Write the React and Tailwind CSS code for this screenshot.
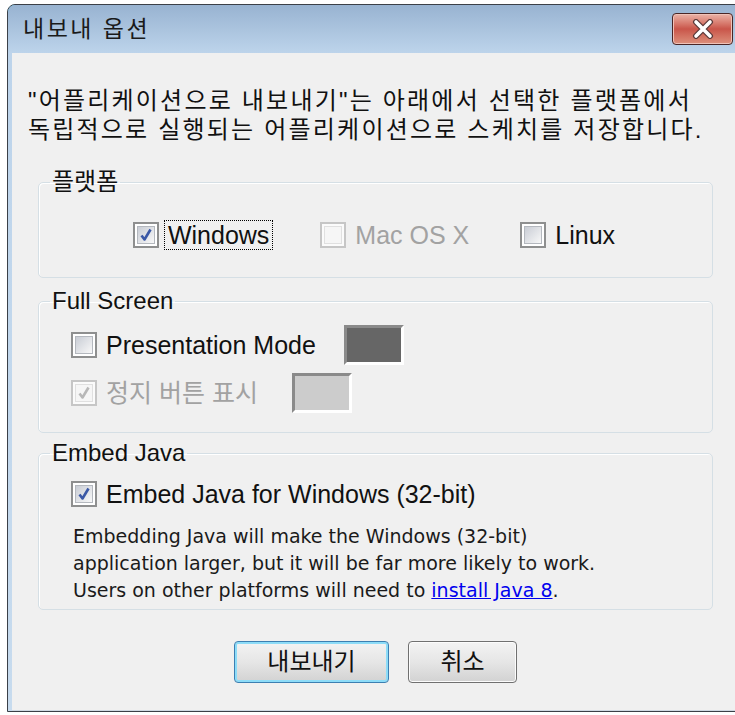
import React from 'react';

// Win7-style check box, drawn at 2x
const CheckBox = ({ checked = false, disabled = false }) => (
    <span
        className={`flex h-[26px] w-[26px] shrink-0 items-center justify-center border-2 ${disabled ? 'border-[#c6c6c6] bg-[#fbfbfb]' : 'border-[#8e8f8f] bg-white'}`}
    >
        <span
            className={`flex h-[18px] w-[18px] items-center justify-center border ${disabled ? 'border-[#e0e0e0] bg-[#f6f6f6]' : 'border-[#b4b8be] bg-linear-to-br from-[#c9cdd5] to-[#f8f8f8]'}`}
        >
            {checked && (
                <svg width="16" height="16" viewBox="0 0 16 16">
                    <path
                        d="M3.5 8.5 L6.5 12.5 L12.5 2.5"
                        fill="none"
                        stroke={disabled ? '#b8b8b8' : '#3a58a6'}
                        strokeWidth="2.6"
                        strokeLinejoin="round"
                    />
                </svg>
            )}
        </span>
    </span>
);

const Option = ({ checked, disabled, focused, children }) => (
    <label className="flex items-center gap-[5px]">
        <CheckBox checked={checked} disabled={disabled} />
        <span
            className={`px-[3px] leading-[28px] ${focused ? 'border border-dotted border-black' : 'border border-transparent'} ${disabled ? 'text-[#a2a2a2]' : 'text-[#111]'}`}
        >
            {children}
        </span>
    </label>
);

// colour well with a sunken edge
const Swatch = ({ dark = false }) => (
    <span
        className={`block h-[40px] w-[60px] border-[3px] border-t-[#8a8a8a] border-l-[#8a8a8a] border-r-white border-b-white ${dark ? 'bg-[#666666]' : 'bg-[#cccccc]'}`}
    />
);

const Group = ({ title, className = '', children }) => (
    <fieldset className={`rounded-[5px] border border-[#d5dfe5] shadow-[inset_1px_1px_0_#fff] ${className}`}>
        <legend className="ml-[11px] px-[2px] text-[24px] leading-[28px] text-[#111]">{title}</legend>
        {children}
    </fieldset>
);

const Button = ({ children, isDefault = false, className = '' }) => (
    <button
        className={`flex h-[42px] items-center justify-center rounded-[4px] border bg-linear-to-b from-[#f3f3f3] via-[#e6e6e6] to-[#d2d2d2] text-[24px] text-[#111] ${isDefault ? 'border-[#3c7fb1] shadow-[inset_0_0_0_2px_#8ddcf8]' : 'border-[#707070] shadow-[inset_0_0_0_1px_#fcfcfc]'} ${className}`}
    >
        {children}
    </button>
);

const App = () => {
    return (
        <div className="h-[715px] w-[735px] overflow-hidden bg-white font-['Liberation_Sans','Noto_Sans_CJK_KR',sans-serif]">
            <div className="ml-[7px] mt-[4px] w-[740px] rounded-tl-[8px] border border-[#3b4048] bg-[#5ccbee]">
                {/* Title bar */}
                <div className="flex h-[48px] items-center rounded-tl-[7px] bg-linear-to-b from-[#98b3d1] to-[#bdd4eb] pl-[15px]">
                    <span className="text-[23px] tracking-[2.5px] text-[#1a1a1a]">내보내 옵션</span>
                    <button className="ml-auto mr-[13px] flex h-[32px] w-[61px] items-center justify-center rounded-[4px] border border-[#4a2626] bg-linear-to-b from-[#eab3a8] via-[#c9554a] to-[#dc907c] shadow-[inset_0_0_0_1px_#f0c2b8]">
                        <svg width="26" height="20" viewBox="0 0 26 20">
                            <path d="M6 3 L20 17 M20 3 L6 17" stroke="#5a3a3a" strokeWidth="6" strokeLinecap="round" />
                            <path d="M6 3 L20 17 M20 3 L6 17" stroke="#ffffff" strokeWidth="3.6" strokeLinecap="round" />
                        </svg>
                    </button>
                </div>

                {/* Client area */}
                <div className="flex">
                    <div className="w-[4px] bg-linear-to-b from-[#bdd4eb] to-[#c7dbee]" />
                    <div className="h-[658px] flex-1 border-b border-[#cfd9e2] bg-[#f0f0f0] pl-[26px] text-[#111]">
                        <p className="-ml-[10px] pt-[33px] text-[24px] leading-[29px] tracking-[2.2px]">
                            "어플리케이션으로 내보내기"는 아래에서 선택한 플랫폼에서
                            <br />
                            독립적으로 실행되는 어플리케이션으로 스케치를 저장합니다.
                        </p>

                        <div className="flex w-[675px] flex-col text-[25px]">
                            <Group title="플랫폼" className="mt-[24px] h-[110px]">
                                <div className="flex justify-center gap-[47px] pt-[24px] pl-[1px]">
                                    <Option checked focused>Windows</Option>
                                    <Option disabled>Mac OS X</Option>
                                    <Option>Linux</Option>
                                </div>
                            </Group>

                            <Group title="Full Screen" className="mt-[9px] h-[146px]">
                                <div className="flex flex-col gap-[8px] pl-[32px] pt-[10px]">
                                    <div className="flex items-center gap-[24px]">
                                        <Option>Presentation Mode</Option>
                                        <Swatch dark />
                                    </div>
                                    <div className="flex items-center gap-[30px]">
                                        <Option checked disabled>정지 버튼 표시</Option>
                                        <Swatch />
                                    </div>
                                </div>
                            </Group>

                            <Group title="Embed Java" className="mt-[6px] h-[171px]">
                                <div className="pl-[32px] pt-[12px]">
                                    <Option checked>Embed Java for Windows (32-bit)</Option>
                                    <p className="ml-[2px] mt-[14px] font-['DejaVu_Sans',sans-serif] text-[19px] leading-[27px] text-[#1a1a1a]">
                                        Embedding Java will make the Windows (32-bit)
                                        <br />
                                        application larger, but it will be far more likely to work.
                                        <br />
                                        Users on other platforms will need to{' '}
                                        <a href="#" className="text-[#0000ee] underline">install Java 8</a>.
                                    </p>
                                </div>
                            </Group>

                            <div className="mt-[31px] flex justify-center gap-[19px]">
                                <Button isDefault className="w-[155px]">내보내기</Button>
                                <Button className="w-[109px]">취소</Button>
                            </div>
                        </div>
                    </div>
                </div>
            </div>
        </div>
    );
};

export default App;
